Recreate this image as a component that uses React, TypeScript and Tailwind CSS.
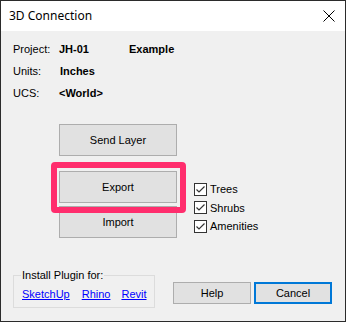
import React from "react";

const Check = ({ label }: { label: string }) => (
  <div className="flex items-center h-[18.5px]">
    <div className="w-[13px] h-[13px] border border-[#333333] bg-white flex items-center justify-center">
      <svg width="11" height="11" viewBox="0 0 11 11">
        <path d="M1.5 5.5 L4 8 L9.5 2.5" fill="none" stroke="#333333" strokeWidth="1.2" />
      </svg>
    </div>
    <span className="ml-[3px]">{label}</span>
  </div>
);

export default function App() {
  return (
    <div
      className="w-[346px] h-[322px] border border-[#2b2b2b] bg-[#f0f0f0] flex flex-col text-[11px] text-black"
      style={{ fontFamily: '"Liberation Sans", Arial, sans-serif' }}
    >
      <div className="h-[30px] bg-white flex items-center justify-between pl-[8px] pr-[8px] shrink-0">
        <span className="text-[12px] text-black" style={{ fontFamily: '"Noto Sans", sans-serif' }}>
          3D Connection
        </span>
        <svg width="14" height="14" viewBox="0 0 14 14" className="mr-[1px]">
          <path d="M1.5 1.5 L12.5 12.5 M12.5 1.5 L1.5 12.5" stroke="#000" strokeWidth="1" fill="none" />
        </svg>
      </div>

      <div className="flex flex-col pl-[12px]">
        <div className="mt-[7px] flex flex-col">
          <div className="h-[22px] flex items-center">
            <span className="w-[46px]">Project:</span>
            <span className="w-[70px] font-bold">JH-01</span>
            <span className="font-bold">Example</span>
          </div>
          <div className="h-[22px] flex items-center">
            <span className="w-[46px]">Units:</span>
            <span className="font-bold ml-[1px]">Inches</span>
          </div>
          <div className="h-[22px] flex items-center">
            <span className="w-[46px]">UCS:</span>
            <span className="font-bold">&lt;World&gt;</span>
          </div>
        </div>

        <div className="mt-[20px] flex">
          <div className="ml-[46px] flex flex-col w-[118px]">
            <div className="h-[32px] border border-[#adadad] bg-[#e1e1e1] flex items-center justify-center">
              Send Layer
            </div>
            <div className="relative mt-[15px] h-[32px] border border-[#adadad] bg-[#e1e1e1] flex items-center justify-center">
              Export
              <div className="absolute left-[-9px] top-[-10px] right-[-10px] bottom-[-11px] border-[6px] border-[#ff2d6d] rounded-[4px]" />
            </div>
            <div className="mt-[3px] h-[32px] border border-[#adadad] bg-[#e1e1e1] flex items-center justify-center">
              Import
            </div>
          </div>
          <div className="ml-[17px] mt-[56px] flex flex-col">
            <Check label="Trees" />
            <Check label="Shrubs" />
            <Check label="Amenities" />
          </div>
        </div>

        <div className="mt-[37px] flex items-start">
          <div className="relative w-[142px] h-[33px] border border-[#dcdcdc]">
            <span className="absolute left-[7px] top-[-8px] bg-[#f0f0f0] px-[1px] leading-[14px]">
              Install Plugin for:
            </span>
            <div className="flex items-center mt-[10px] ml-[8px] text-[#0000ff] underline">
              <span>SketchUp</span>
              <span className="ml-[12px]">Rhino</span>
              <span className="ml-[11px]">Revit</span>
            </div>
          </div>
          <div className="ml-[18px] mt-[7px] flex">
            <div className="w-[78px] h-[22px] border border-[#adadad] bg-[#e1e1e1] flex items-center justify-center">
              Help
            </div>
            <div className="ml-[3px] w-[78px] h-[22px] border-2 border-[#0078d7] bg-[#e1e1e1] flex items-center justify-center">
              Cancel
            </div>
          </div>
        </div>
      </div>
    </div>
  );
}
